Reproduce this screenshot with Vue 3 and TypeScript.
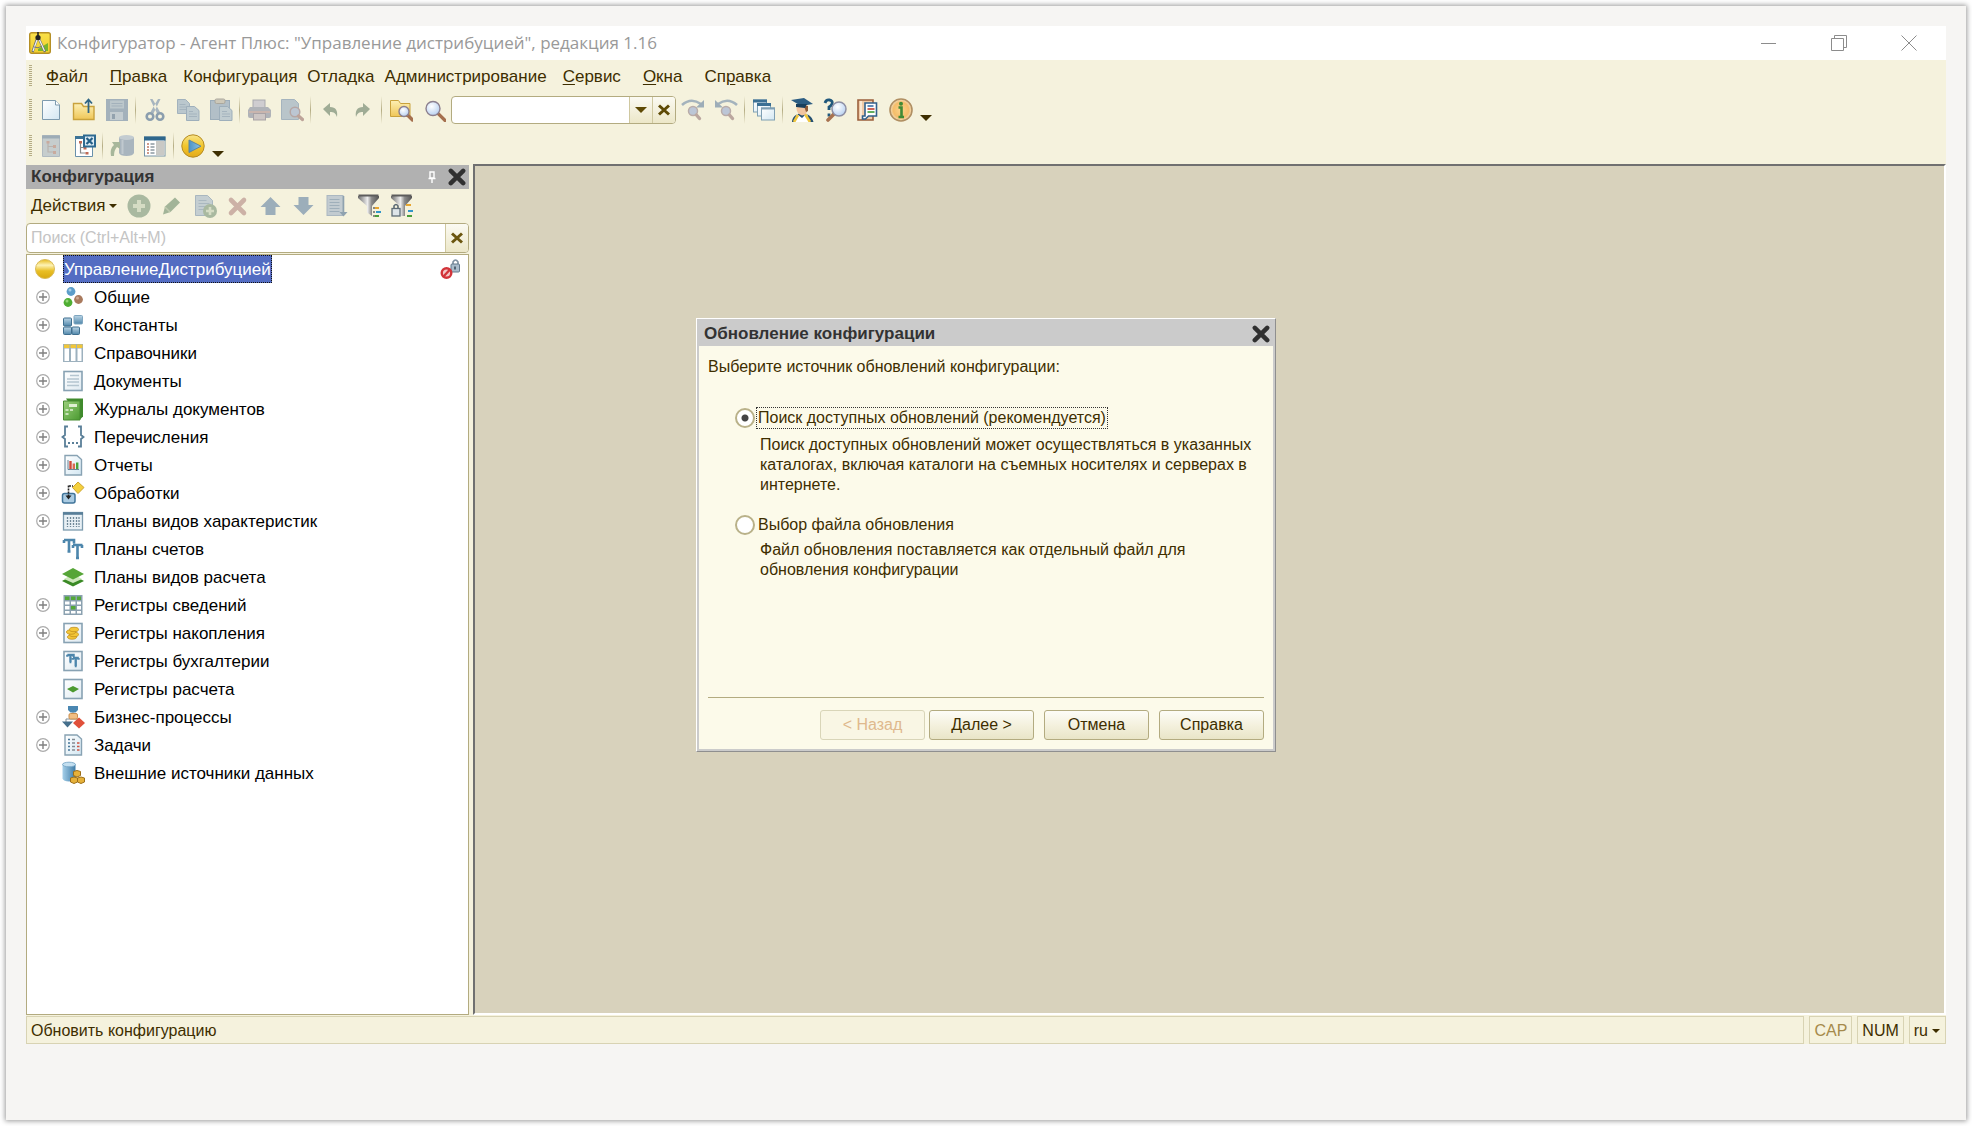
<script setup lang="ts">
import { ref } from 'vue'

interface MenuItem {
  before: string
  key: string
  after: string
  tight?: boolean
}

interface TreeItem {
  label: string
  icon: string
  expandable: boolean
}

const menu: MenuItem[] = [
  { before: '', key: 'Ф', after: 'айл' },
  { before: '', key: 'П', after: 'равка' },
  { before: 'Конфигурация', key: '', after: '', tight: true },
  { before: 'Отладка', key: '', after: '', tight: true },
  { before: 'Администрирование', key: '', after: '', tight: true },
  { before: '', key: 'С', after: 'ервис' },
  { before: '', key: 'О', after: 'кна' },
  { before: 'Сп', key: 'р', after: 'авка' },
]

// '|' marks a separator between tool groups
const fileTools = ['new', 'open', 'save', '|', 'cut', 'copy', 'paste', '|', 'print', 'preview', '|', 'undo', 'redo', '|', 'findFolder', 'find']
const searchTools = ['findNext', 'findPrev', '|', 'windows', '|', 'scholar', 'helpFind', 'book', 'info']
const configTools = ['treeOff', 'treeClose', '|', 'dbUpdate', 'panel', '|', 'run']
const panelTools = ['add', 'edit', 'addCopy', 'remove', 'up', 'down', 'sort', 'filter', 'filterLock']

const titles: Record<string, string> = {
  new: 'Новый', open: 'Открыть', save: 'Сохранить', cut: 'Вырезать', copy: 'Копировать', paste: 'Вставить',
  print: 'Печать', preview: 'Просмотр', undo: 'Отменить', redo: 'Повторить', findFolder: 'Глобальный поиск', find: 'Найти',
  findNext: 'Найти далее', findPrev: 'Найти назад', windows: 'Окна', scholar: 'Синтакс-помощник', helpFind: 'Поиск в справке',
  book: 'Содержание справки', info: 'О программе', treeOff: 'Открыть конфигурацию', treeClose: 'Закрыть конфигурацию',
  dbUpdate: 'Обновить базу данных', panel: 'Окно конфигурации', run: 'Начать отладку', add: 'Добавить', edit: 'Изменить',
  addCopy: 'Добавить копированием', remove: 'Удалить', up: 'Вверх', down: 'Вниз', sort: 'Упорядочить', filter: 'Отбор', filterLock: 'Отбор по подсистемам',
}

const tree: TreeItem[] = [
  { label: 'Общие', icon: 'common', expandable: true },
  { label: 'Константы', icon: 'constants', expandable: true },
  { label: 'Справочники', icon: 'catalogs', expandable: true },
  { label: 'Документы', icon: 'documents', expandable: true },
  { label: 'Журналы документов', icon: 'journals', expandable: true },
  { label: 'Перечисления', icon: 'enums', expandable: true },
  { label: 'Отчеты', icon: 'reports', expandable: true },
  { label: 'Обработки', icon: 'processing', expandable: true },
  { label: 'Планы видов характеристик', icon: 'charTypes', expandable: true },
  { label: 'Планы счетов', icon: 'accounts', expandable: false },
  { label: 'Планы видов расчета', icon: 'calcTypes', expandable: false },
  { label: 'Регистры сведений', icon: 'infoReg', expandable: true },
  { label: 'Регистры накопления', icon: 'accumReg', expandable: true },
  { label: 'Регистры бухгалтерии', icon: 'accReg', expandable: false },
  { label: 'Регистры расчета', icon: 'calcReg', expandable: false },
  { label: 'Бизнес-процессы', icon: 'business', expandable: true },
  { label: 'Задачи', icon: 'tasks', expandable: true },
  { label: 'Внешние источники данных', icon: 'external', expandable: false },
]

const lens = (x: number, y: number, r: number, rim = '#8c7f8e', handle = '#a5704e') =>
  `<path d="M${x + r * 0.7} ${y + r * 0.7}L${x + r * 1.7} ${y + r * 1.7}" stroke="${handle}" stroke-width="3.4" stroke-linecap="round"/><circle cx="${x}" cy="${y}" r="${r}" fill="url(#g-lens)" stroke="${rim}" stroke-width="1.4"/>`

const frame = '<rect x="3" y="2.5" width="18" height="19" fill="url(#g-frame)" stroke="#88a2b3" stroke-width="1.6"/>'
const tt = 'M3 3h10v3.500M3 3v3M8 3v11.500M6.500 14.500h3M12 8h9.500M12 8v3M21 8v3M16.500 8v13M15 21h3'

const icons: Record<string, string> = {
  new: '<path d="M3.500 2.500h13l4 4.500v14.500h-17z" fill="url(#g-paper)" stroke="#7e9bae"/><path d="M16.500 2.500v4.500h4" fill="#fff" stroke="#7e9bae"/>',
  open: '<path d="M1.500 5.500h8l2 3h10.500v13h-20.500z" fill="url(#g-folder)" stroke="#c9a23c" stroke-width="1.400"/><path d="M16.500 15V2M13 5.500l3.500-4 3.500 4" fill="none" stroke="#2f6585" stroke-width="1.800"/>',
  save: '<rect x="1" y="1" width="22" height="22" fill="#a3b1bb"/><rect x="5" y="2.500" width="14" height="8" fill="#bcc7cb"/><path d="M6.500 5.500h11M6.500 8h11" stroke="#a3b1bb"/><rect x="5" y="14" width="13" height="8" fill="#c3ccd0"/><rect x="7" y="16" width="3" height="5" fill="#93a2ae"/>',
  cut: '<path d="M7 1l2.500 0 7.500 13-3 1.500zM17.500 1l-2.500 0-7.500 13 3 1.500z" fill="#a7b5bf"/><circle cx="7" cy="18.500" r="3.300" fill="none" stroke="#8b9eae" stroke-width="2.600"/><circle cx="17" cy="18.500" r="3.300" fill="none" stroke="#8b9eae" stroke-width="2.600"/>',
  copy: '<path d="M1.500 1.500h8l4 4v10h-12z" fill="#bac7cd" stroke="#a2b2bd"/><path d="M3.500 6.500h6M3.500 9h7M3.500 11.500h7" stroke="#a5b4be"/><path d="M10.500 8.500h8l4.500 4v10h-12.500z" fill="#bdcacf" stroke="#9eafbb"/><path d="M13 13.500h4M13 16h8M13 18.500h8" stroke="#a5b4be"/>',
  paste: '<rect x="1.500" y="2.500" width="19" height="19" fill="#b2bfc7" stroke="#9cadb9"/><rect x="6" y="1" width="10" height="4.500" rx="1.500" fill="#cdc8b8" stroke="#aaa79d"/><path d="M10.500 8.500h8l4.500 4v10h-12.500z" fill="#c0ccd0" stroke="#9eafbb"/><path d="M13 13.500h5M13 16h8M13 18.500h8" stroke="#a5b4be"/>',
  print: '<rect x="6" y="2" width="12" height="9" fill="#cfcdd0" stroke="#a9a9ae"/><path d="M3 9h18l3 3v6q0 2-2 2H3q-2 0-2-2v-6z" fill="#b0b3b8"/><path d="M2 14h21" stroke="#c9b5ae" stroke-width="2"/><rect x="6.500" y="15.500" width="12" height="6.500" fill="#cdc6c4" stroke="#a9a3a6"/>',
  preview: '<path d="M1.500 1.500h13l4 4v16h-17z" fill="#b9c5ca" stroke="#a5b4be"/><circle cx="15" cy="14" r="4.800" fill="#bcc6d2" stroke="#b6a6a4" stroke-width="1.500"/><path d="M18.500 18l4 3.500" stroke="#bda399" stroke-width="3.400" stroke-linecap="round"/>',
  undo: '<path d="M5 11l7-6v4c6 0 8 4 7 10-1.500-4-3-5-7-5v4z" fill="#9fac95"/>',
  redo: '<path d="M19 11l-7-6v4c-6 0-8 4-7 10 1.500-4 3-5 7-5v4z" fill="#9fac95"/>',
  findFolder: '<path d="M1.500 2.500h8l2 3h9.500v13h-19.500z" fill="url(#g-folder)" stroke="#c9a23c"/>' + lens(15, 13.5, 5),
  find: lens(11, 10.5, 7),
  findNext: '<path d="M1 7q9-8 19-1" fill="none" stroke="#a4b3bd" stroke-width="2.600"/><path d="M23 2v7.500h-8z" fill="#9dadb8"/><circle cx="12" cy="13" r="4.500" fill="#bcc6d6" stroke="#b9aca9" stroke-width="1.500"/><path d="M15.500 17l3 3.500" stroke="#bba79f" stroke-width="3.400" stroke-linecap="round"/>',
  findPrev: '<path d="M23 7q-9-8-19-1" fill="none" stroke="#a4b3bd" stroke-width="2.600"/><path d="M1 2v7.500h8z" fill="#9dadb8"/><circle cx="12" cy="13" r="4.500" fill="#bcc6d6" stroke="#b9aca9" stroke-width="1.500"/><path d="M15.500 17l3 3.500" stroke="#bba79f" stroke-width="3.400" stroke-linecap="round"/>',
  windows: '<g fill="url(#g-paper)" stroke="#7f9fb3"><rect x="1.500" y="2" width="13" height="12"/><rect x="5.500" y="6" width="13" height="12"/><rect x="9.500" y="10" width="13" height="12"/></g><path d="M1 3h14M5 6.500h14" stroke="#3a6f93" stroke-width="2.800"/><path d="M9 10.500h14" stroke="#7f9fb3" stroke-width="2"/>',
  scholar: '<path d="M2 24c0-5 4-8 9-9 6 0 11 3 12.500 9z" fill="#234f72"/><path d="M7 16l5 4 5-5 2 9H4z" fill="#fff"/><path d="M4 24l4-7M20 24l-5-8" stroke="#efc53b" stroke-width="2.600"/><path d="M6.500 7h11v5q-1 5-5.500 5.500Q7 16 6.500 11z" fill="#f1c5a0"/><path d="M14 8h4v5l-2 1z" fill="#8e5a35"/><path d="M1 2l13-2 9 6-12 2z" fill="#2c5d82"/><path d="M6 6v3l9 1 2-4z" fill="#183f5c"/>',
  helpFind: '<path d="M2 5q1-3.500 4.500-3t2.500 4q-1 2-3 3v3M6 15.500v3" fill="none" stroke="#20587c" stroke-width="2.800"/><path d="M11 16l-6 6" stroke="#a87350" stroke-width="3.600" stroke-linecap="round"/><circle cx="16" cy="11" r="7" fill="url(#g-lens)" stroke="#8e8fa4" stroke-width="1.500"/>',
  book: '<path d="M2 2h15v20h-15z" fill="#f0cba8" stroke="#9b603c" stroke-width="1.600"/><path d="M5 3v18" stroke="#fff3e3" stroke-width="1.500"/><path d="M9 5h11.500v13h-8l-3 3h-3v-3h2.500z" fill="#fff" stroke="#32618c" stroke-width="1.600"/><path d="M11.500 8h6" stroke="#3a6fa8" stroke-width="1.600"/><path d="M11.500 11h7" stroke="#c03c2e" stroke-width="1.600"/><path d="M11.500 14h7" stroke="#3c9a37" stroke-width="1.600"/>',
  info: '<circle cx="12" cy="12" r="11" fill="url(#g-info)" stroke="#b08f62" stroke-width="1.600"/><path d="M9.500 9.500h3v9M9.500 19h5.500" fill="none" stroke="#3f8a36" stroke-width="2.600"/><circle cx="12" cy="5.800" r="2" fill="#3f8a36"/>',
  treeOff: '<path d="M3.500 1.500h17v21h-17z" fill="#c6cdcd" stroke="#b0bac0"/><path d="M3 3h18" stroke="#9dacb6" stroke-width="3"/><path d="M9 8v10h6M9 12.500h6" fill="none" stroke="#b9b3ae" stroke-width="1.200"/><path d="M7.500 7h3v2.500h-3zM14 11h3v3h-3zM14 17h3v3h-3z" fill="#c9aa9d"/>',
  treeClose: '<path d="M3.500 2.500h17v20h-17z" fill="#fff" stroke="#6990aa"/><path d="M3 3.500h12" stroke="#3b7396" stroke-width="3"/><path d="M8.500 9v10h5M8.500 13.500h3" fill="none" stroke="#888" stroke-width="1.200"/><path d="M7 7h3v2.500H7zM13.500 18h3v2.500h-3zM11.500 13h3v2.500h-3z" fill="#c06a55"/><rect x="12" y="1.500" width="11" height="11" fill="#dcebf4" stroke="#2e6a91" stroke-width="2"/><path d="M14.500 4l6 6M20.500 4l-6 6" stroke="#245f87" stroke-width="2.200"/>',
  dbUpdate: '<path d="M9 3v16q1 3 7.500 3t7.500-3v-16z" fill="#a9b5be"/><ellipse cx="16.500" cy="3.500" rx="7.500" ry="2.500" fill="#c3ccd1"/><path d="M12.500 6v14" stroke="#c0c9cf" stroke-width="2"/><path d="M1 22c-1-7 1-9 3-11L2 8h8v7l-3-2q-3 3-3 9z" fill="#a7b79b"/>',
  panel: '<rect x="1.500" y="3" width="20.500" height="19" fill="#fff" stroke="#7694a8"/><path d="M1 4.500h21.500" stroke="#2f678c" stroke-width="4"/><rect x="13" y="7" width="8.500" height="14.500" fill="#c9c9c5"/><path d="M4 10h2M4 13h2M4 16h2M4 19h2" stroke="#c07a63" stroke-width="1.400"/><path d="M7.500 10h4M7.500 13h4M7.500 16h4M7.500 19h4" stroke="#8d99a1" stroke-width="1.400"/>',
  run: '<circle cx="12" cy="12" r="11.200" fill="url(#g-gold)" stroke="#b48b25"/><path d="M8 6v12.500l12-6.300z" fill="url(#g-blue)" stroke="#5d86a0"/>',
  add: '<circle cx="12" cy="12" r="11.500" fill="#a9b9a0"/><path d="M12 6v12M6 12h12" stroke="#d5dcc4" stroke-width="4"/>',
  edit: '<path d="M3 20.500l2-8 10-9 5 5-9.500 9.500z" fill="#a2b498"/><path d="M5 13l5 5" stroke="#c0caaf" stroke-width="1.500"/>',
  addCopy: '<path d="M2.500 1.500h12l5 5v15h-17z" fill="#c4ced1" stroke="#a9b7bf"/><path d="M5.500 6.500h8M5.500 9.500h11M5.500 12.500h11M5.500 15.500h7" stroke="#aab8c0"/><circle cx="17" cy="17" r="7" fill="#a9b9a0"/><path d="M17 13v8M13 17h8" stroke="#d5dcc4" stroke-width="2.600"/>',
  remove: '<path d="M5 6l13 13M18 6L5 19" stroke="#ccb1a6" stroke-width="4.600" stroke-linecap="round"/>',
  up: '<path d="M11.500 3l10 10h-5v8h-10v-8h-5z" fill="#9caeba"/>',
  down: '<path d="M11.500 21l10-10h-5v-8h-10v8h-5z" fill="#9caeba"/>',
  sort: '<rect x="2" y="1.500" width="16" height="20" fill="#c2cbd0" stroke="#abb8c1"/><path d="M4.500 5.500h10M4.500 8.500h10M4.500 11.500h10M4.500 14.500h10M4.500 17.500h10" stroke="#9fafba"/><path d="M18.500 2v17" stroke="#8fa2af" stroke-width="1.600"/><path d="M14.500 18h8l-4 4.500z" fill="#8fa2af"/>',
  filter: '<path d="M0 2h21v2l-7 8v10l-5-3.500V12L0 4z" fill="url(#g-funnel)"/><path d="M.5 1.500h20" stroke="#5c5c5c" stroke-width="2"/><path d="M15 14h2M15 18h2M15 22h2" stroke="#666" stroke-width="1.600"/><path d="M17 14h4" stroke="#e7a52f" stroke-width="2"/><path d="M18 18h5" stroke="#3296c8" stroke-width="2"/><path d="M17 22h4" stroke="#4a9d3a" stroke-width="2"/>',
  filterLock: '<path d="M0 2h21v2l-7 8v10h-5V12L0 4z" fill="url(#g-funnel)"/><path d="M.5 1.500h20" stroke="#5c5c5c" stroke-width="2"/><path d="M15 11h5" stroke="#e7a52f" stroke-width="2"/><path d="M17 17h5" stroke="#3296c8" stroke-width="2"/><path d="M16 22h5" stroke="#4a9d3a" stroke-width="2"/><path d="M3 15v-3q2-3 4 0v3" fill="none" stroke="#5d6b76" stroke-width="1.600"/><rect x="1" y="14.500" width="8" height="7.500" fill="#dde4e8" stroke="#5d6b76" stroke-width="1.300"/>',
  common: '<circle cx="10" cy="6.500" r="4.400" fill="#5c9dc9"/><circle cx="7" cy="17.500" r="4.400" fill="#4fae33"/><circle cx="17.500" cy="14.500" r="4.400" fill="#a97a5e"/><circle cx="9" cy="5" r="1.500" fill="#a5cde7"/><circle cx="6" cy="16" r="1.500" fill="#92d676"/><circle cx="16.500" cy="13" r="1.500" fill="#d0aa92"/>',
  constants: '<g fill="url(#g-block)" stroke="#3f6f8f"><rect x="2.500" y="5" width="8" height="8" rx="1"/><rect x="2.500" y="14" width="8" height="7.500" rx="1"/><rect x="11" y="14" width="7.500" height="7.500" rx="1"/><rect x="13" y="2.500" width="8.500" height="8.500" rx="1" stroke="#7fa6c0"/></g>',
  catalogs: '<rect x="2" y="3" width="20" height="18" fill="#9db1be"/><path d="M3.500 7.500h4.500V20H3.500zM10 7.500h4.500V20H10zM16.500 7.500h4V20h-4z" fill="#fff"/><path d="M3 3.500h5.500v3.500H3zM9.500 3.500H15v3.500H9.500zM16 3.500h5.500v3.500H16z" fill="#f0c63a"/>',
  documents: frame + '<path d="M9 6.500h9M6 10h12M6 13h12M6 16.500h12" stroke="#b4c5d0" stroke-width="1.300"/>',
  journals: '<path d="M5 1.500h17v18l-3 3z" fill="#3f8a2c"/><path d="M2.500 4h16.500v19h-16.500z" fill="url(#g-green)" stroke="#478b31"/><rect x="8" y="7" width="8" height="3" fill="#dff0d3"/><path d="M4.500 13h3M4.500 17h3M9 13h3" stroke="#e3f3da" stroke-width="1.600"/>',
  enums: '<path d="M7 1.500H4v8.500l-2.500 2 2.500 2v7.500h3M17 1.500h3v8.500l2.500 2-2.500 2v7.500h-3" fill="none" stroke="#5a7f98" stroke-width="1.800"/><path d="M7 18h2M11 18h2M15 18h2" stroke="#5a7f98" stroke-width="2"/>',
  reports: '<path d="M4 2.500h12l4.500 4v15.500h-16.500z" fill="url(#g-paper)" stroke="#88a2b3" stroke-width="1.400"/><path d="M7 7v9.500h11" fill="none" stroke="#6a8596"/><path d="M9.500 8v8" stroke="#d0493a" stroke-width="2.400"/><path d="M12.800 10.500v5.500" stroke="#db6a50" stroke-width="2.400"/><path d="M16.200 9.500v6.500" stroke="#4aa33c" stroke-width="2.400"/>',
  processing: '<rect x="1.500" y="12.500" width="12.500" height="9.500" rx="2" fill="#aacbe2" stroke="#41759a" stroke-width="1.500"/><path d="M7.500 4.500v12M8 5h4" stroke="#222" stroke-width="1.600" stroke-dasharray="2 1"/><path d="M4.500 14.500h6l-3 4z" fill="#222"/><path d="M17 1l6 5.500-6 6-5.500-6z" fill="#f4d03e" stroke="#cda42e"/>',
  charTypes: '<rect x="2.500" y="3.500" width="19" height="17.500" fill="#e8f0f5" stroke="#7d9bae" stroke-width="1.300"/><path d="M2 4.500h20" stroke="#587f99" stroke-width="2.600"/><path d="M6.500 8v10M9.500 8v10M12.500 8v10M15.500 8v10M18 8v10" stroke="#6f8797" stroke-width="1.300" stroke-dasharray="2 1"/>',
  accounts: `<path d="${tt}" fill="none" stroke="#4d86ac" stroke-width="2.600"/>`,
  calcTypes: '<path d="M12 10l11 6-11 5.500L1 16z" fill="#3a8a25"/><path d="M12 9l9 5-9 4-9-4z" fill="#cfe8bd"/><path d="M12 3l11 6-11 5.500L1 9z" fill="#56a537"/>',
  infoReg: '<rect x="2.500" y="2" width="19" height="20" fill="#8ba1b0"/><path d="M4 3.500h4.500v3.500H4zM10 3.500h4.500v3.500H10zM16 3.500h4v3.500h-4zM10 13h4.500v3.500H10z" fill="#54a838"/><path d="M4 8.500h4.500v3H4zM10 8.500h4.500v3H10zM16 8.500h4v3h-4zM4 13h4.500v3.500H4zM16 13h4v3.500h-4zM4 18h4.500v2.500H4zM10 18h4.500v2.500H10zM16 18h4v2.500h-4z" fill="#fff"/>',
  accumReg: frame + '<g fill="#f3c638" stroke="#c1901d" stroke-width=".8"><ellipse cx="11" cy="16" rx="4.500" ry="2.200"/><ellipse cx="13" cy="13.500" rx="4.500" ry="2.200"/><ellipse cx="10" cy="11" rx="4.500" ry="2.200"/><ellipse cx="13" cy="8.500" rx="4.500" ry="2.200"/></g>',
  accReg: frame + `<path transform="translate(4.500 4) scale(.62)" d="${tt}" fill="none" stroke="#4d86ac" stroke-width="3.800"/>`,
  calcReg: frame + '<path d="M12 9l6 3-6 3.500L6 12z" fill="#4c9a30"/>',
  business: '<path d="M7 1h10v4l-2.500 2.500h-5L7 5z" fill="#4a87b2"/><path d="M12 7v7M5 17v-3h14v3" fill="none" stroke="#7f8d97"/><rect x="8" y="8.500" width="8.500" height="5.500" rx="1.500" fill="#f1be83" stroke="#c98e4e"/><path d="M1 16.500h11l-5.500 6z" fill="#456f8c"/><path d="M18 12.500l6 5.500-6 5.500-6-5.500z" fill="#e0503a"/>',
  tasks: '<path d="M4 2h12l4.500 4v16h-16.500z" fill="url(#g-paper)" stroke="#88a2b3" stroke-width="1.400"/><path d="M7 6.500h2M7 10h2M7 13.500h2M7 17h2" stroke="#48789a" stroke-width="1.600"/><path d="M11 6.500h3M11 10h3M11 13.500h3M11 17h3" stroke="#828b92" stroke-width="1.600"/><path d="M16 10h2.500M16 13.500h2.500M16 17h2.500" stroke="#cf5544" stroke-width="1.600"/>',
  external: '<path d="M1.500 3.500v14q1 3 6.500 3t6.500-3v-14z" fill="url(#g-cyl)"/><ellipse cx="8" cy="3.500" rx="6.500" ry="2.300" fill="#c3dff0" stroke="#6da0c2" stroke-width=".8"/><g fill="#e6b13a" stroke="#9d6f18"><path d="M16 9.500l3.500 1v4l-3.500 1.500-3.500-1.500v-4z"/><path d="M13 16l3.500 1v4L13 22.500 9.500 21v-4zM20 16l3.500 1v4L20 22.500 16.500 21v-4z"/></g>',
}

const source = ref<'search' | 'file'>('search')
const query = ref('')
const treeQuery = ref('')
</script>

<template>
  <svg class="defs" aria-hidden="true">
    <defs>
      <linearGradient id="g-paper" x1="0" y1="0" x2="1" y2="1"><stop offset="0" stop-color="#fff" /><stop offset="1" stop-color="#d3e7f2" /></linearGradient>
      <linearGradient id="g-frame" x1="0" y1="0" x2="1" y2="1"><stop offset="0" stop-color="#fff" /><stop offset="1" stop-color="#dfeaf1" /></linearGradient>
      <linearGradient id="g-folder" x1="0" y1="0" x2="0" y2="1"><stop offset="0" stop-color="#fdf0b4" /><stop offset="1" stop-color="#efc657" /></linearGradient>
      <linearGradient id="g-gold" x1="0" y1="0" x2="0" y2="1"><stop offset="0" stop-color="#f8e489" /><stop offset=".5" stop-color="#f2c62b" /><stop offset="1" stop-color="#e3aa1c" /></linearGradient>
      <linearGradient id="g-ball" x1="0" y1="0" x2="0" y2="1"><stop offset="0" stop-color="#e8bb1c" /><stop offset=".3" stop-color="#fdf3b6" /><stop offset=".6" stop-color="#e9bf25" /><stop offset="1" stop-color="#d8a80f" /></linearGradient>
      <linearGradient id="g-blue" x1="0" y1="0" x2="1" y2="0"><stop offset="0" stop-color="#4b93c6" /><stop offset="1" stop-color="#8fc3e2" /></linearGradient>
      <linearGradient id="g-block" x1="0" y1="0" x2="0" y2="1"><stop offset="0" stop-color="#bcd6e6" /><stop offset="1" stop-color="#4f86aa" /></linearGradient>
      <linearGradient id="g-green" x1="0" y1="0" x2="1" y2="1"><stop offset="0" stop-color="#9bcf7c" /><stop offset="1" stop-color="#4a9a30" /></linearGradient>
      <linearGradient id="g-funnel" x1="0" y1="0" x2="1" y2="0"><stop offset="0" stop-color="#6a6a6a" /><stop offset=".45" stop-color="#ededed" /><stop offset=".65" stop-color="#8a8a8a" /><stop offset="1" stop-color="#555" /></linearGradient>
      <linearGradient id="g-cyl" x1="0" y1="0" x2="1" y2="0"><stop offset="0" stop-color="#a5cfe9" /><stop offset="1" stop-color="#3e7ba6" /></linearGradient>
      <linearGradient id="g-app" x1="0" y1="0" x2="0" y2="1"><stop offset="0" stop-color="#f9e04a" /><stop offset="1" stop-color="#f0cf2c" /></linearGradient>
      <radialGradient id="g-lens" cx=".4" cy=".35" r=".7"><stop offset="0" stop-color="#fff" /><stop offset="1" stop-color="#b5cff0" /></radialGradient>
      <radialGradient id="g-info"><stop offset="0" stop-color="#fbd48d" /><stop offset=".7" stop-color="#f5bd6a" /><stop offset="1" stop-color="#f3dfc0" /></radialGradient>
    </defs>
  </svg>

  <div class="sheet">
    <main class="window">
      <header class="titlebar">
        <svg class="app-icon" viewBox="0 0 22 22" aria-hidden="true">
          <rect x=".7" y=".7" width="20.600" height="20.600" rx="2" fill="url(#g-app)" stroke="#b58f25" stroke-width="1.400" />
          <path d="M9 17l10-6v8H9z" fill="#79b52c" />
          <path d="M8 7L3.500 20M10 7l6 13" stroke="#6e7176" stroke-width="2.400" />
          <path d="M8 8L4 19M10.500 8l5 11" stroke="#f4f4f4" stroke-width="1.200" />
          <path d="M5 15q4 2 8-1" fill="none" stroke="#777" />
          <circle cx="9" cy="5.500" r="2.600" fill="#222" /><path d="M9 0v5" stroke="#222" stroke-width="1.600" />
        </svg>
        <h1>Конфигуратор - Агент Плюс: "Управление дистрибуцией", редакция 1.16</h1>
        <div class="sysbuttons">
          <button type="button" aria-label="Свернуть"><svg viewBox="0 0 16 16"><path d="M0 8.500h15" /></svg></button>
          <button type="button" aria-label="Восстановить"><svg viewBox="0 0 16 16"><path d="M.5 3.500h12v12h-12zM3.500 3.500v-3h12v12h-3" /></svg></button>
          <button type="button" aria-label="Закрыть"><svg viewBox="0 0 16 16"><path d="M.5.5l15 15M15.500.5l-15 15" /></svg></button>
        </div>
      </header>

      <nav class="menubar">
        <i class="grip"></i>
        <button v-for="m in menu" :key="m.before + m.key" type="button" class="menu-item" :class="{ tight: m.tight }">{{ m.before }}<u v-if="m.key">{{ m.key }}</u>{{ m.after }}</button>
      </nav>

      <div class="toolbar">
        <i class="grip"></i>
        <template v-for="(t, i) in fileTools" :key="i">
          <i v-if="t === '|'" class="sep"></i>
          <button v-else type="button" class="tool" :aria-label="titles[t]"><svg viewBox="0 0 24 24" v-html="icons[t]"></svg></button>
        </template>
        <div class="combo">
          <input v-model="query" type="text" aria-label="Строка поиска" />
          <button type="button" aria-label="Список"><svg viewBox="0 0 12 12"><path d="M0 3h12L6 9z" fill="#5e4a05" /></svg></button>
          <button type="button" aria-label="Очистить"><svg viewBox="0 0 12 12"><path d="M1 1.500l10 9M11 1.500l-10 9" stroke="#5e4a05" stroke-width="3" /></svg></button>
        </div>
        <template v-for="(t, i) in searchTools" :key="i">
          <i v-if="t === '|'" class="sep"></i>
          <button v-else type="button" class="tool" :aria-label="titles[t]"><svg viewBox="0 0 24 24" v-html="icons[t]"></svg></button>
        </template>
        <button type="button" class="more" aria-label="Ещё"></button>
      </div>

      <div class="toolbar">
        <i class="grip"></i>
        <template v-for="(t, i) in configTools" :key="i">
          <i v-if="t === '|'" class="sep"></i>
          <button v-else type="button" class="tool" :aria-label="titles[t]"><svg viewBox="0 0 24 24" v-html="icons[t]"></svg></button>
        </template>
        <button type="button" class="more" aria-label="Ещё"></button>
      </div>

      <div class="workspace">
        <aside class="panel">
          <div class="panel-head">
            <h2>Конфигурация</h2>
            <button type="button" aria-label="Закрепить"><svg class="pin" viewBox="0 0 8 12"><path d="M2 1h4v6H2zM.5 7.500h7M4 8v4" fill="none" stroke="#fff" stroke-width="1.400" /></svg></button>
            <button type="button" aria-label="Закрыть панель"><svg class="cross" viewBox="0 0 16 16"><path d="M2.500 2.500l11 11M13.500 2.500l-11 11" /></svg></button>
          </div>
          <div class="panel-tools">
            <button type="button" class="actions">Действия<svg viewBox="0 0 8 4"><path d="M0 0h8L4 4z" fill="#3e2e00" /></svg></button>
            <button v-for="t in panelTools" :key="t" type="button" class="tool" :aria-label="titles[t]"><svg viewBox="0 0 24 24" v-html="icons[t]"></svg></button>
          </div>
          <div class="combo search">
            <input v-model="treeQuery" type="text" placeholder="Поиск (Ctrl+Alt+M)" aria-label="Поиск" />
            <button type="button" aria-label="Очистить"><svg viewBox="0 0 12 12"><path d="M1 1.500l10 9M11 1.500l-10 9" stroke="#6b560f" stroke-width="3" /></svg></button>
          </div>
          <ul class="tree" role="tree">
            <li class="root" role="treeitem">
              <svg class="ball" viewBox="0 0 20 20"><circle cx="10" cy="10" r="9.500" fill="url(#g-ball)" stroke="#d9bb5a" /></svg>
              <span class="selected">УправлениеДистрибуцией</span>
              <svg class="lock" viewBox="0 0 20 20">
                <path d="M13 5.500V3q2.500-4 5 0v2.500" fill="none" stroke="#7d90a0" stroke-width="1.600" />
                <rect x="11" y="5" width="8.500" height="8" rx="1" fill="#a9bccb" stroke="#62788a" /><path d="M15 7.500v3" stroke="#3b4e5c" stroke-width="1.600" />
                <circle cx="6.500" cy="14" r="4.800" fill="#f3c9c9" stroke="#d2343a" stroke-width="2.400" /><path d="M3.500 17.500l6.500-7" stroke="#d2343a" stroke-width="2.400" />
              </svg>
            </li>
            <li v-for="item in tree" :key="item.label" role="treeitem">
              <span class="expander"><svg v-if="item.expandable" viewBox="0 0 14 14"><circle cx="7" cy="7" r="6.300" fill="#fff" stroke="#ababab" stroke-width="1.200" /><path d="M7 3v8M3 7h8" stroke="#808080" stroke-width="1.400" /></svg></span>
              <svg class="node" viewBox="0 0 24 24" v-html="icons[item.icon]"></svg>
              <span class="caption">{{ item.label }}</span>
            </li>
          </ul>
        </aside>
        <section class="mdi"></section>
      </div>

      <footer class="status">
        <span class="cell message">Обновить конфигурацию</span>
        <span class="cell off">CAP</span>
        <span class="cell">NUM</span>
        <button type="button" class="cell lang">ru<svg viewBox="0 0 8 4"><path d="M0 0h8L4 4z" fill="#3e2e00" /></svg></button>
      </footer>

      <div class="overlay">
        <form class="dialog" role="dialog" aria-labelledby="dlg-title" @submit.prevent>
          <div class="dialog-head">
            <h2 id="dlg-title">Обновление конфигурации</h2>
            <button type="button" aria-label="Закрыть"><svg class="cross" viewBox="0 0 16 16"><path d="M2.500 2.500l11 11M13.500 2.500l-11 11" /></svg></button>
          </div>
          <div class="dialog-body">
            <p>Выберите источник обновлений конфигурации:</p>
            <div class="options">
              <div class="option">
                <input id="src-search" v-model="source" type="radio" name="source" value="search" />
                <label for="src-search" :class="{ focused: source === 'search' }">Поиск доступных обновлений (рекомендуется)</label>
              </div>
              <p class="hint">Поиск доступных обновлений может осуществляться в указанных каталогах, включая каталоги на съемных носителях и серверах в интернете.</p>
              <div class="option">
                <input id="src-file" v-model="source" type="radio" name="source" value="file" />
                <label for="src-file" :class="{ focused: source === 'file' }">Выбор файла обновления</label>
              </div>
              <p class="hint">Файл обновления поставляется как отдельный файл для обновления конфигурации</p>
            </div>
            <div class="buttons">
              <button type="button" disabled>&lt; Назад</button>
              <button type="submit">Далее &gt;</button>
              <button type="button" class="apart">Отмена</button>
              <button type="button" class="apart">Справка</button>
            </div>
          </div>
        </form>
      </div>
    </main>
  </div>
</template>

<style>
body {
  background: #fff;
}
</style>

<style scoped>
* {
  box-sizing: border-box;
}

.defs {
  position: absolute;
  width: 0;
  height: 0;
}

.sheet {
  display: flex;
  min-height: 100vh;
  padding: 20px 20px 76px;
  border: 6px solid #fff;
  background: #f6f5f3;
  background-clip: padding-box;
  font: 17px/20px "Liberation Sans", Arial, sans-serif;
  color: #3e2e00;
  position: relative;
}

.sheet::after {
  content: "";
  position: absolute;
  inset: 0;
  box-shadow: 0 0 5px 1px rgba(0, 0, 0, 0.4);
  pointer-events: none;
}

h1,
h2,
p,
ul {
  margin: 0;
  padding: 0;
}

button {
  font: inherit;
  color: inherit;
  padding: 0;
  border: 0;
  background: none;
}

.window {
  position: relative;
  flex: 1;
  display: flex;
  flex-direction: column;
  min-width: 0;
  background: #f5f2dd;
}

.titlebar {
  display: flex;
  align-items: center;
  height: 34px;
  padding: 0 2px 0 3px;
  background: #fff;
}

.app-icon {
  width: 22px;
  height: 22px;
}

.titlebar h1 {
  flex: 1;
  margin-left: 6px;
  font: 400 17px/24px "Open Sans", "Noto Sans", sans-serif;
  color: #999;
}

.sysbuttons {
  display: flex;
}

.sysbuttons button {
  display: grid;
  place-items: center;
  width: 70px;
  height: 32px;
}

.sysbuttons svg {
  width: 16px;
  height: 16px;
  fill: none;
  stroke: #8c8c8c;
}

.menubar,
.toolbar {
  display: flex;
  align-items: center;
  padding-left: 3px;
}

.menubar {
  height: 32px;
}

.toolbar {
  height: 36px;
}

.grip {
  width: 3px;
  height: 22px;
  margin-right: 2px;
  background: repeating-linear-gradient(#b5ad84 0 1px, transparent 1px 2px);
}

.menubar .grip {
  margin-right: 3px;
}

.menu-item {
  padding: 2px 11px 0;
  white-space: nowrap;
}

.menu-item.tight {
  padding: 2px 5px 0;
}

.menu-item u {
  text-underline-offset: 2px;
}

.tool {
  display: grid;
  place-items: center;
  width: 33px;
  height: 30px;
}

.tool svg {
  width: 24px;
  height: 24px;
}

.sep {
  width: 1px;
  height: 28px;
  margin: 0 2px;
  background: linear-gradient(#f5f2dd, #b5ad84, #f5f2dd);
}

.more {
  width: 18px;
  height: 28px;
}

.more::after {
  content: "";
  display: block;
  margin: 16px auto 0;
  width: 0;
  border: 6px solid transparent;
  border-top-color: #3e2e00;
  border-bottom: 0;
}

.combo {
  display: flex;
  width: 225px;
  height: 28px;
  margin-left: 1px;
  border: 1px solid #b3ab80;
  border-radius: 4px;
  background: #fff;
  overflow: hidden;
}

.combo input {
  flex: 1;
  min-width: 0;
  padding: 0 4px;
  border: 0;
  outline: 0;
  background: none;
  font: inherit;
  font-size: 16px;
  color: inherit;
}

.combo input::placeholder {
  color: #c4c4c4;
  opacity: 1;
}

.combo button {
  display: grid;
  place-items: center;
  width: 23px;
  border-left: 1px solid #cfc8a0;
  background: linear-gradient(#fbfaf2, #ece7c8);
}

.combo svg {
  width: 12px;
  height: 12px;
}

.workspace {
  flex: 1;
  display: flex;
  gap: 4px;
}

.panel {
  display: flex;
  flex-direction: column;
  width: 443px;
  padding-top: 1px;
}

.panel-head,
.dialog-head {
  display: flex;
  align-items: center;
  color: #333;
}

.panel-head h2,
.dialog-head h2 {
  flex: 1;
  font-size: 17px;
  line-height: 20px;
}

.panel-head {
  height: 24px;
  padding: 0 3px 0 5px;
  gap: 12px;
  background: #b1b1b1;
}

.panel-head button,
.dialog-head button {
  display: grid;
  place-items: center;
}

.pin {
  width: 8px;
  height: 12px;
}

.cross {
  width: 18px;
  height: 18px;
  stroke: #303030;
  stroke-width: 4;
  stroke-linecap: round;
}

.panel-tools {
  display: flex;
  align-items: center;
  height: 34px;
  padding-left: 5px;
}

.actions {
  display: flex;
  align-items: center;
  gap: 4px;
  width: 91px;
}

.actions svg,
.status svg {
  width: 8px;
  height: 4px;
}

.search {
  width: 100%;
  height: 30px;
  margin: 0 0 1px;
}

.tree {
  flex: 1;
  list-style: none;
  border: 1px solid #b3ab80;
  background: #fff;
  color: #000;
}

.tree li {
  display: flex;
  align-items: center;
  height: 28px;
  padding-left: 9px;
}

.tree .root {
  padding-left: 8px;
}

.expander {
  display: flex;
  width: 14px;
  margin-right: 11px;
}

.expander svg {
  width: 14px;
  height: 14px;
}

.node {
  width: 24px;
  height: 24px;
  margin-right: 9px;
}

.caption {
  padding-top: 1px;
}

.ball {
  width: 20px;
  height: 20px;
  margin-right: 8px;
}

.selected {
  padding: 4px 1px 2px;
  outline: 1px dotted #111;
  outline-offset: -1px;
  background: #536cc2;
  color: #fff;
  line-height: 22px;
}

.lock {
  width: 20px;
  height: 20px;
  margin: 0 8px 0 auto;
}

.mdi {
  flex: 1;
  border: 2px solid #707070;
  border-right-color: #fff;
  border-bottom-color: #fff;
  background: #d8d2bc;
}

.status {
  display: flex;
  gap: 5px;
  padding-top: 1px;
  font-size: 16px;
}

.cell {
  display: flex;
  align-items: center;
  gap: 4px;
  height: 28px;
  padding: 1px 4px 0;
  border: 1px solid #d8d3b3;
}

.lang {
  padding: 1px 5px 0 4px;
}

.message {
  flex: 1;
}

.off {
  color: #a58a4b;
}

.overlay {
  position: absolute;
  inset: 0;
  display: grid;
  place-items: center;
}

.dialog {
  width: 580px;
  border: 1px solid #fff;
  border-right-color: #8f8f8f;
  border-bottom-color: #8f8f8f;
  background: #cbcbcb;
  padding: 0 2px 2px;
  font-size: 16px;
}

.dialog-head {
  height: 27px;
  padding: 2px 3px 0 5px;
}

.dialog-body {
  display: flex;
  flex-direction: column;
  min-height: 403px;
  padding: 11px 9px 9px;
  background: #fcfaea;
}

.options {
  flex: 1;
  padding: 31px 0 0 27px;
}

.option {
  display: flex;
  align-items: center;
  height: 20px;
}

.option input {
  appearance: none;
  width: 20px;
  height: 20px;
  margin: 0 2px 0 0;
  border: 2px solid #b9b189;
  border-radius: 50%;
  background: #fff;
}

.option input:checked {
  background: radial-gradient(circle, #444 0 3px, #fff 4px);
}

.option label {
  padding: 0 1px;
  outline-offset: 0;
}

.option label.focused {
  outline: 1px dotted #333;
}

.hint {
  margin: 7px 0 20px;
  padding-left: 25px;
}

.option + .hint:last-child {
  margin: 5px 0 0;
}

.buttons {
  display: flex;
  justify-content: flex-end;
  gap: 4px;
  padding-top: 12px;
  border-top: 1px solid #b3ab80;
}

.buttons button {
  width: 105px;
  height: 30px;
  border: 1px solid #b3ab80;
  border-radius: 3px;
  background: linear-gradient(#fdfcf7, #f4f1de 50%, #e9e5c8);
}

.buttons .apart {
  margin-left: 6px;
}

.buttons button:disabled {
  border-color: #d9d5b8;
  color: #dfb98d;
  background: #f9f6e4;
}
</style>
